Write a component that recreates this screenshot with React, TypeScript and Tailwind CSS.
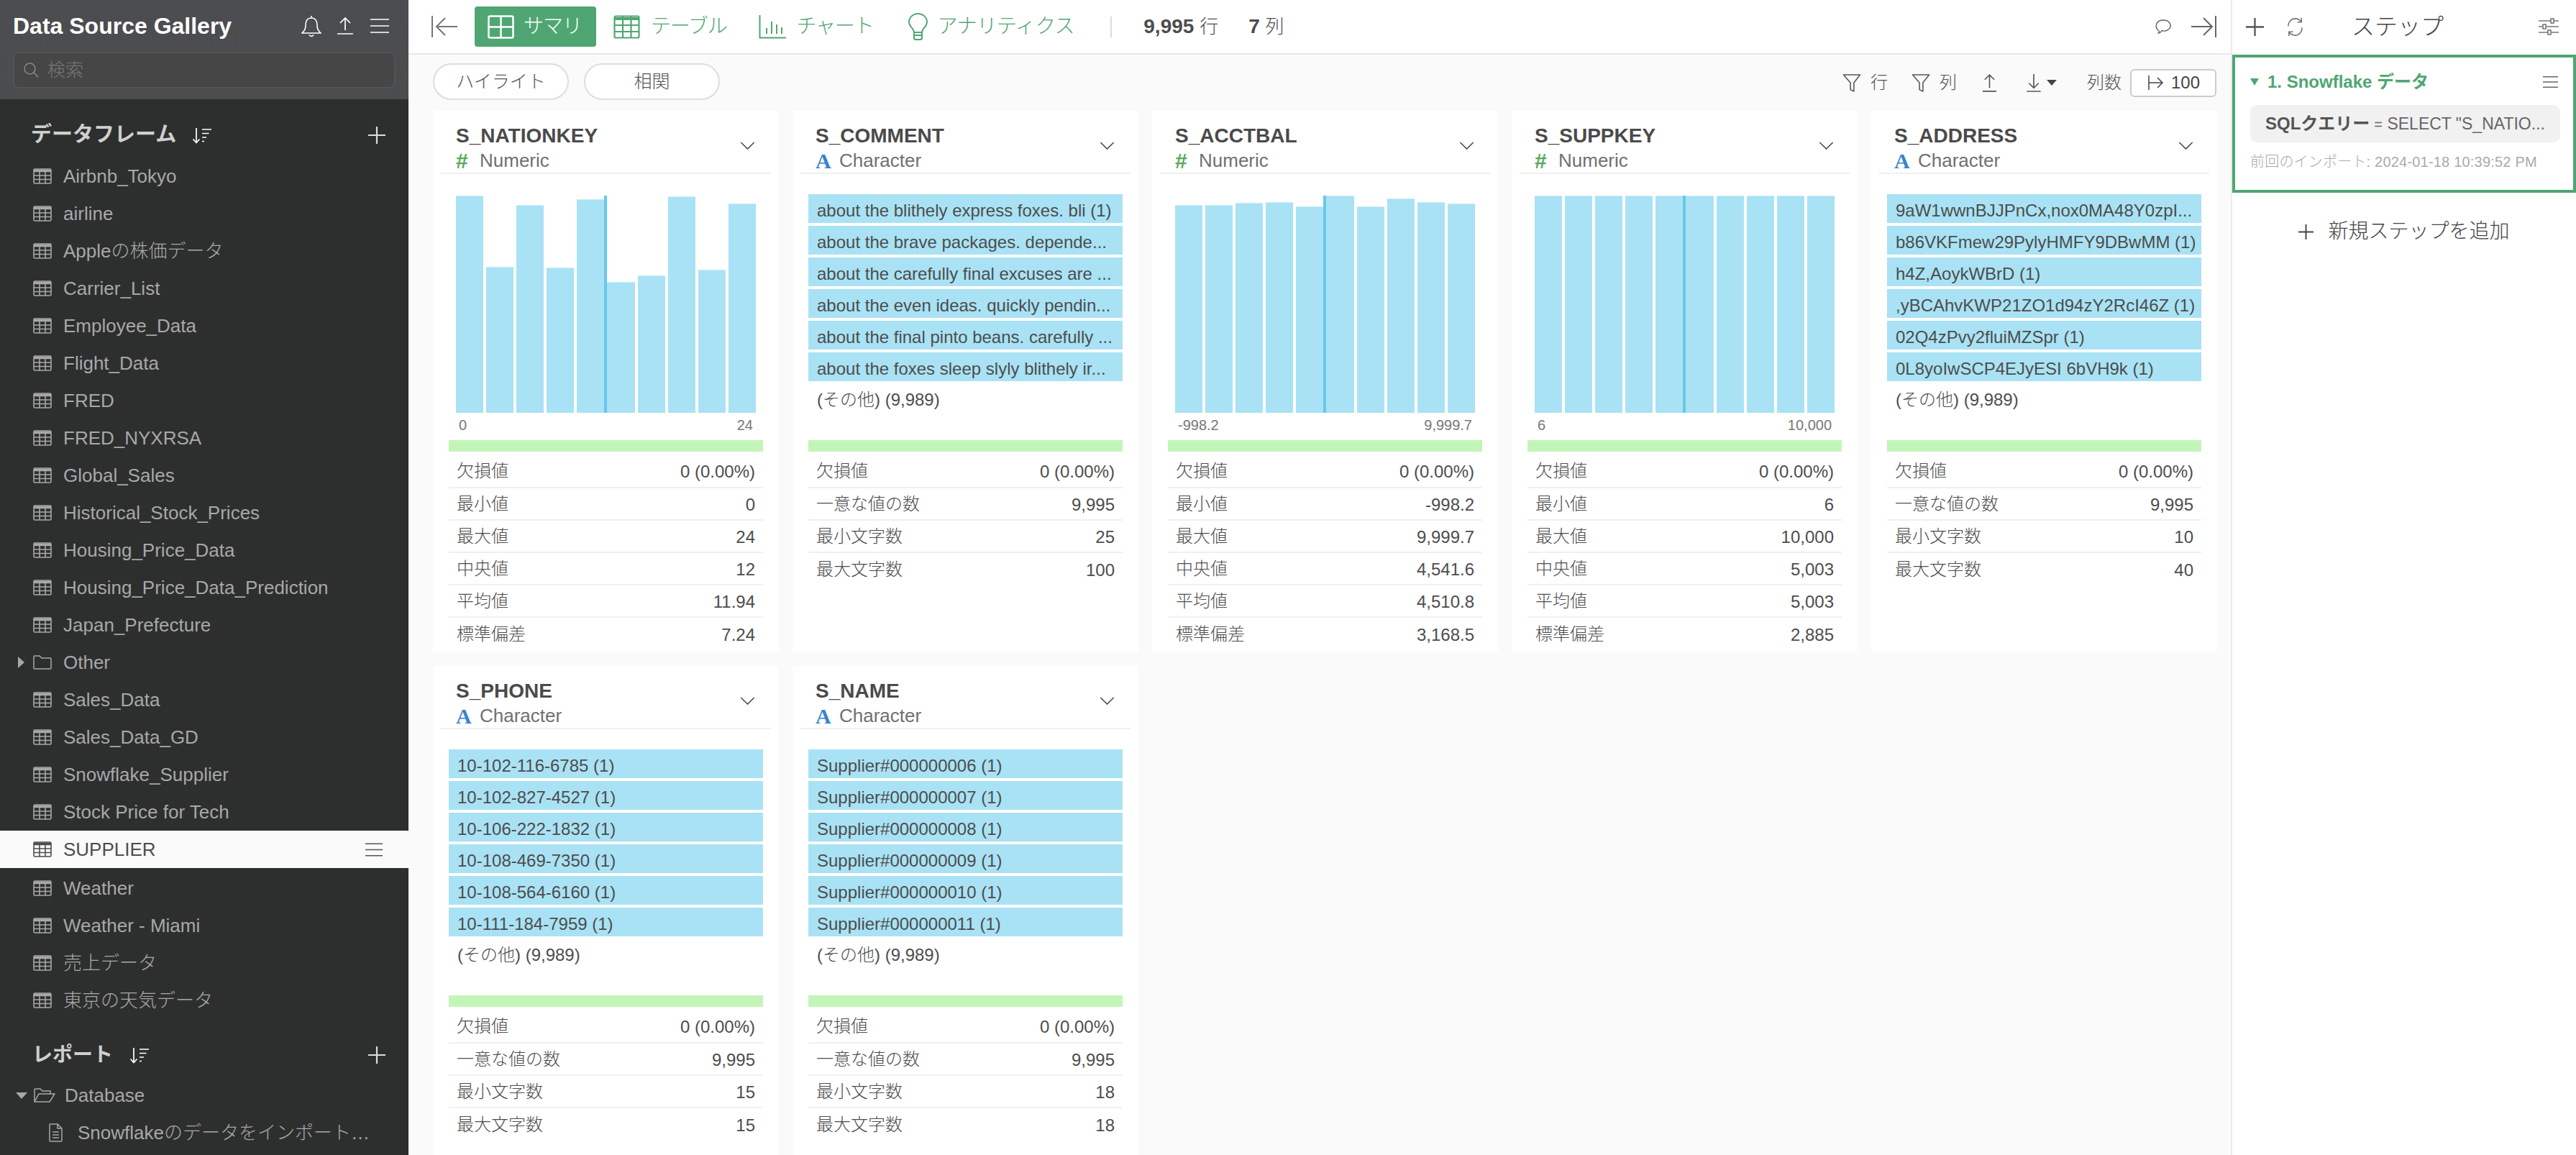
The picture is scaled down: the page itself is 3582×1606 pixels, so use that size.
import React from "react";

const frames = [
  "Airbnb_Tokyo", "airline", "Appleの株価データ", "Carrier_List", "Employee_Data", "Flight_Data", "FRED", "FRED_NYXRSA",
  "Global_Sales", "Historical_Stock_Prices", "Housing_Price_Data", "Housing_Price_Data_Prediction", "Japan_Prefecture",
  "Other", "Sales_Data", "Sales_Data_GD", "Snowflake_Supplier", "Stock Price for Tech", "SUPPLIER", "Weather",
  "Weather - Miami", "売上データ", "東京の天気データ",
];

type Stat = [string, string];

interface CardData {
  name: string;
  kind: "num" | "chr";
  bars?: number[];
  min?: string;
  max?: string;
  items?: string[];
  stats: Stat[];
}

const charStats = (lo: string, hi: string): Stat[] => [
  ["欠損値", "0 (0.00%)"],
  ["一意な値の数", "9,995"],
  ["最小文字数", lo],
  ["最大文字数", hi],
];

const numStats = (a: string, b: string, c: string, d: string, e: string): Stat[] => [
  ["欠損値", "0 (0.00%)"],
  ["最小値", a],
  ["最大値", b],
  ["中央値", c],
  ["平均値", d],
  ["標準偏差", e],
];

const cards: CardData[] = [
  { name: "S_NATIONKEY", kind: "num", bars: [302, 203, 289, 202, 297, 182, 191, 301, 199, 291], min: "0", max: "24", stats: numStats("0", "24", "12", "11.94", "7.24") },
  {
    name: "S_COMMENT", kind: "chr",
    items: ["about the blithely express foxes. bli (1)", "about the brave packages. depende...", "about the carefully final excuses are ...", "about the even ideas. quickly pendin...", "about the final pinto beans. carefully ...", "about the foxes sleep slyly blithely ir..."],
    stats: charStats("25", "100"),
  },
  { name: "S_ACCTBAL", kind: "num", bars: [289, 289, 292, 293, 287, 302, 287, 298, 293, 291], min: "-998.2", max: "9,999.7", stats: numStats("-998.2", "9,999.7", "4,541.6", "4,510.8", "3,168.5") },
  { name: "S_SUPPKEY", kind: "num", bars: [302, 302, 302, 302, 302, 302, 302, 302, 302, 302], min: "6", max: "10,000", stats: numStats("6", "10,000", "5,003", "5,003", "2,885") },
  {
    name: "S_ADDRESS", kind: "chr",
    items: ["9aW1wwnBJJPnCx,nox0MA48Y0zpI...", "b86VKFmew29PylyHMFY9DBwMM (1)", "h4Z,AoykWBrD (1)", ",yBCAhvKWP21ZO1d94zY2RcI46Z (1)", "02Q4zPvy2fluiMZSpr (1)", "0L8yoIwSCP4EJyESI 6bVH9k (1)"],
    stats: charStats("10", "40"),
  },
  {
    name: "S_PHONE", kind: "chr",
    items: ["10-102-116-6785 (1)", "10-102-827-4527 (1)", "10-106-222-1832 (1)", "10-108-469-7350 (1)", "10-108-564-6160 (1)", "10-111-184-7959 (1)"],
    stats: charStats("15", "15"),
  },
  {
    name: "S_NAME", kind: "chr",
    items: ["Supplier#000000006 (1)", "Supplier#000000007 (1)", "Supplier#000000008 (1)", "Supplier#000000009 (1)", "Supplier#000000010 (1)", "Supplier#000000011 (1)"],
    stats: charStats("18", "18"),
  },
];

function TableIcon({ className }: { className?: string }) {
  return (
    <svg viewBox="0 0 26 22" className={className} fill="none" stroke="currentColor" strokeWidth="1.6">
      <rect x="1" y="1" width="24" height="20" rx="1.5" />
      <path d="M1 3.5h24" strokeWidth="3.5" />
      <path d="M1 10h24M1 15.5h24M9 4v17M17 4v17" />
    </svg>
  );
}

function Burger({ className }: { className?: string }) {
  return (
    <svg viewBox="0 0 26 20" className={className} fill="none" stroke="currentColor" strokeWidth="1.7">
      <path d="M0 1h26M0 10h26M0 19h26" />
    </svg>
  );
}

function SortIcon({ className }: { className?: string }) {
  return (
    <svg viewBox="0 0 28 23" className={className} fill="none" stroke="currentColor" strokeWidth="1.7">
      <path d="M6 1v20M1.5 16.5 6 21.5l4.5-5" />
      <path d="M14 3h13M14 8.5h9.5M14 14h6M14 19.5h3" />
    </svg>
  );
}

function PlusIcon({ className }: { className?: string }) {
  return (
    <svg viewBox="0 0 24 24" className={className} fill="none" stroke="currentColor" strokeWidth="2.2">
      <path d="M12 0v24M0 12h24" />
    </svg>
  );
}

function Chevron() {
  return (
    <svg viewBox="0 0 22 12" className="mt-[10px] h-[11px] w-[21px] text-[#444]" fill="none" stroke="currentColor" strokeWidth="1.6">
      <path d="M1 1l10 10L21 1" />
    </svg>
  );
}

function Funnel() {
  return (
    <svg viewBox="0 0 26 26" className="h-[25px] w-[26px] text-[#555]" fill="none" stroke="currentColor" strokeWidth="1.6" strokeLinejoin="round">
      <path d="M1 1h24L16 12.500V25l-5-2.500V12.500z" />
    </svg>
  );
}

function StatsRow({ stat, first, last }: { stat: Stat; first: boolean; last: boolean }) {
  return (
    <div className={`flex items-center justify-between px-[11px] text-[24px] text-[#4d4d4d] ${first ? "h-[51px] pt-[5px]" : "h-[45px]"} ${last ? "" : "border-b-2 border-[#f0f0f0]"}`}>
      <span>{stat[0]}</span>
      <span className="mt-[2px]">{stat[1]}</span>
    </div>
  );
}

function ColumnCard({ card }: { card: CardData }) {
  return (
    <div className="h-[752px] bg-white">
      <div className="mx-[11px] flex h-[88px] items-center justify-between border-b-2 border-[#f0f0f0] pl-[21px] pr-[22px]">
        <div className="pt-[18px]">
          <div className="text-[28px] leading-[34px] font-bold text-[#4a4a4a]">{card.name}</div>
          <div className="flex h-[34px] items-center text-[26px] text-[#707070]">
            {card.kind === "num" ? (
              <span className="mr-[13px] w-[20px] text-[30px] font-bold text-[#5aa95c]">#</span>
            ) : (
              <span className="mr-[13px] w-[20px] font-['Liberation_Serif'] text-[30px] font-bold text-[#3684cc]">A</span>
            )}
            {card.kind === "num" ? "Numeric" : "Character"}
          </div>
        </div>
        <Chevron />
      </div>

      {card.kind === "num" ? (
        <div className="h-[370px] px-[32px] pt-[30px]">
          <div className="relative flex h-[302px] items-end gap-[4px]">
            {card.bars!.map((h, i) => (
              <div key={i} className="flex-1 border-t border-[#c8eef9] bg-[#a9e2f4]" style={{ height: h }} />
            ))}
            <div className="absolute top-0 bottom-0 left-[206px] w-[4px] bg-[#66c9ea]" />
          </div>
          <div className="flex h-[34px] items-center justify-between px-[4px] text-[20px] text-[#777]">
            <span>{card.min}</span>
            <span>{card.max}</span>
          </div>
        </div>
      ) : (
        <div className="h-[370px] px-[22px] pt-[28px]">
          <div className="flex flex-col gap-[4px]">
            {card.items!.map((t) => (
              <div key={t} className="flex h-[40px] items-center overflow-hidden bg-[#a9e2f4] pt-[5px] pl-[12px] text-[24px] whitespace-nowrap text-[#4d4d4d]">
                {t}
              </div>
            ))}
          </div>
          <div className="flex h-[52px] items-center pl-[12px] text-[24px] text-[#4d4d4d]">(その他) (9,989)</div>
        </div>
      )}

      <div className="mx-[22px] h-[16px] bg-[#c3f5b8]" />
      <div className="mx-[22px]">
        {card.stats.map((s, i) => (
          <StatsRow key={s[0]} stat={s} first={i === 0} last={i === card.stats.length - 1} />
        ))}
      </div>
    </div>
  );
}

function Sidebar() {
  return (
    <aside className="flex w-[568px] shrink-0 flex-col bg-[#2d2f2f]">
      <div className="h-[138px] bg-gradient-to-b from-[#4c4d50] to-[#4a4c4e] px-[18px]">
        <div className="flex h-[72px] items-center justify-between pr-[9px]">
          <span className="text-[32px] font-bold text-white">Data Source Gallery</span>
          <div className="flex items-center text-white">
            <svg viewBox="0 0 28 31" className="h-[31px] w-[28px]" fill="none" stroke="currentColor" strokeWidth="1.6">
              <path d="M14 1v3M14 4c-6 0-8 5-8 10 0 6-2 8-5 11h26c-3-3-5-5-5-11 0-5-2-10-8-10zM11 27.500c1 2.500 5 2.500 6 0" />
            </svg>
            <svg viewBox="0 0 22 24" className="ml-[22px] h-[24px] w-[22px]" fill="none" stroke="currentColor" strokeWidth="1.7">
              <path d="M11 1v17M4 8l7-7 7 7M0 23h22" />
            </svg>
            <Burger className="ml-[24px] h-[20px] w-[26px]" />
          </div>
        </div>
        <div className="flex h-[51px] items-center rounded-[8px] border-2 border-[#525354] bg-[#464646] pl-[13px] text-[25px] text-[#777]">
          <svg viewBox="0 0 21 21" className="mr-[12px] h-[21px] w-[21px]" fill="none" stroke="#8a8a8a" strokeWidth="1.5">
            <circle cx="8.500" cy="8.500" r="7.500" />
            <path d="M14 14l6 6" />
          </svg>
          検索
        </div>
      </div>

      <div className="flex h-[81px] items-center justify-between pt-[19px] pr-[32px] pl-[43px] text-[#cfcfcf]">
        <div className="flex items-center">
          <span className="text-[29px] font-bold">データフレーム</span>
          <SortIcon className="ml-[22px] h-[23px] w-[28px] text-white" />
        </div>
        <PlusIcon className="h-[24px] w-[24px] text-[#ddd]" />
      </div>

      {frames.map((name) =>
        name === "Other" ? (
          <div key={name} className="flex h-[52px] items-center text-[26px] text-[#a8a8a8]">
            <span className="ml-[25px] h-0 w-0 border-y-[8px] border-l-[9px] border-y-transparent border-l-[#a8a8a8]" />
            <svg viewBox="0 0 26 20" className="ml-[12px] h-[20px] w-[26px]" fill="none" stroke="currentColor" strokeWidth="1.5">
              <path d="M2 1h7l3 3h12a1 1 0 0 1 1 1v13a1 1 0 0 1-1 1H2a1 1 0 0 1-1-1V2a1 1 0 0 1 1-1z" />
            </svg>
            <span className="ml-[16px]">{name}</span>
          </div>
        ) : (
          <div key={name} className={`flex h-[52px] items-center pl-[46px] text-[26px] ${name === "SUPPLIER" ? "mb-[2px] bg-[#fafafa] text-[#4d4d4d]" : "text-[#a8a8a8]"}`}>
            <TableIcon className="mr-[16px] h-[22px] w-[26px] shrink-0" />
            <span className="flex-1">{name}</span>
            {name === "SUPPLIER" && <Burger className="mr-[36px] h-[19px] w-[24px] text-[#555]" />}
          </div>
        )
      )}

      <div className="flex h-[80px] items-center justify-between pt-[20px] pr-[32px] pl-[45px] text-[#cfcfcf]">
        <div className="flex items-center">
          <span className="text-[28px] font-bold">レポート</span>
          <SortIcon className="ml-[23px] h-[23px] w-[28px] text-white" />
        </div>
        <PlusIcon className="h-[24px] w-[24px] text-[#ddd]" />
      </div>
      <div className="flex h-[52px] items-center text-[26px] text-[#a8a8a8]">
        <span className="ml-[22px] h-0 w-0 border-x-[8px] border-t-[9px] border-x-transparent border-t-[#a8a8a8]" />
        <svg viewBox="0 0 30 20" className="ml-[9px] h-[20px] w-[30px]" fill="none" stroke="currentColor" strokeWidth="1.5">
          <path d="M1 18V2a1 1 0 0 1 1-1h7l3 3h11v4M1 19h21l7-11H7z" />
        </svg>
        <span className="ml-[13px]">Database</span>
      </div>
      <div className="flex h-[52px] items-center text-[26px] text-[#a8a8a8]">
        <svg viewBox="0 0 19 26" className="ml-[68px] h-[26px] w-[19px]" fill="none" stroke="currentColor" strokeWidth="1.5">
          <path d="M2 1h10l6 6v17a1 1 0 0 1-1 1H2a1 1 0 0 1-1-1V2a1 1 0 0 1 1-1zM12 1v6h6M5 12h9M5 16h9M5 20h9" />
        </svg>
        <span className="ml-[21px] whitespace-nowrap">Snowflakeのデータをインポート…</span>
      </div>
    </aside>
  );
}

function TopBar() {
  return (
    <div className="flex h-[76px] shrink-0 items-center border-b-2 border-[#e8e8e8] bg-white pl-[32px] text-[28px] text-[#4fa673]">
      <svg viewBox="0 0 36 30" className="h-[30px] w-[36px] text-[#777]" fill="none" stroke="currentColor" strokeWidth="2">
        <path d="M1 0v30M36 15H8M19 3 7 15l12 12" />
      </svg>
      <div className="ml-[24px] flex h-[56px] w-[169px] items-center rounded-[4px] bg-[#4fa673] pl-[18px] tracking-[-1px] text-white">
        <svg viewBox="0 0 37 33" className="mr-[13px] h-[33px] w-[37px]" fill="none" stroke="currentColor" strokeWidth="2.500">
          <rect x="1.500" y="1.500" width="34" height="30" rx="2" />
          <path d="M1.500 16.500h34M18.500 1.500v30" />
        </svg>
        サマリ
      </div>
      <div className="ml-[24px] flex items-center tracking-[-1.2px]">
        <svg viewBox="0 0 37 33" className="mr-[15px] h-[33px] w-[37px]" fill="none" stroke="currentColor" strokeWidth="2.200">
          <rect x="1.500" y="1.500" width="34" height="30" rx="2" />
          <path d="M1.500 5h34" strokeWidth="4" />
          <path d="M1.500 14h34M1.500 23h34M13 1.500v30M24.500 1.500v30" />
        </svg>
        テーブル
      </div>
      <div className="ml-[44px] flex items-center tracking-[-1.2px]">
        <svg viewBox="0 0 38 33" className="mr-[15px] h-[33px] w-[38px]" fill="none" stroke="currentColor" strokeWidth="2">
          <path d="M1.500 0v31.500H38" />
          <path d="M11 26v-8M18 26V9M25 26V13M32 26v-9" />
        </svg>
        チャート
      </div>
      <div className="ml-[49px] flex items-center tracking-[-0.3px]">
        <svg viewBox="0 0 27 38" className="mr-[13px] h-[38px] w-[27px]" fill="none" stroke="currentColor" strokeWidth="2">
          <path d="M8 27c0-5-7-8-7-14.500a12.500 11.500 0 0 1 25 0C26 19 19 22 19 27zM8 27v8a2 2 0 0 0 2 2h7a2 2 0 0 0 2-2v-8M8 31h11" />
        </svg>
        アナリティクス
      </div>
      <div className="ml-[50px] h-[29px] w-[2px] bg-[#ddd]" />
      <div className="ml-[44px] text-[#4d4d4d]">
        <span className="font-bold">9,995</span> <span className="text-[26px]">行</span>
      </div>
      <div className="ml-[42px] text-[#4d4d4d]">
        <span className="font-bold">7</span> <span className="text-[26px]">列</span>
      </div>
      <div className="ml-auto flex items-center pr-[20px] text-[#666]">
        <svg viewBox="0 0 26 22" className="h-[21px] w-[26px]" fill="none" stroke="currentColor" strokeWidth="1.500">
          <path d="M7 17c-8-6-4-16 6-16s14 9 7 14c-3 2-7 2-9 1-1 2-3 4-5 4 1-1 1-2 1-3z" />
        </svg>
        <svg viewBox="0 0 35 30" className="ml-[26px] h-[30px] w-[35px]" fill="none" stroke="currentColor" strokeWidth="2">
          <path d="M34 0v30M0 15h28M17 3l12 12-12 12" />
        </svg>
      </div>
    </div>
  );
}

function FilterBar() {
  return (
    <div className="flex h-[78px] shrink-0 items-center pl-[34px] text-[24px] text-[#555]">
      <div className="mb-[3px] flex h-[51px] w-[189px] items-center justify-center rounded-full border-2 border-[#ddd] bg-white text-[25px]">ハイライト</div>
      <div className="mb-[3px] ml-[21px] flex h-[51px] w-[189px] items-center justify-center rounded-full border-2 border-[#ddd] bg-white text-[25px]">相関</div>
      <div className="ml-auto flex items-center pr-[20px]">
        <Funnel />
        <span className="ml-[13px]">行</span>
        <span className="ml-[33px]"><Funnel /></span>
        <span className="ml-[13px]">列</span>
        <svg viewBox="0 0 20 26" className="ml-[36px] h-[25px] w-[19px]" fill="none" stroke="currentColor" strokeWidth="1.700">
          <path d="M10 1v19M3 8l7-7 7 7M0 25h20" />
        </svg>
        <svg viewBox="0 0 20 26" className="ml-[42px] h-[25px] w-[20px]" fill="none" stroke="currentColor" strokeWidth="1.700">
          <path d="M10 0v19M3 13l7 7 7-7M0 25h20" />
        </svg>
        <span className="ml-[8px] h-0 w-0 border-x-[7px] border-t-[8px] border-x-transparent border-t-[#444]" />
        <span className="ml-[42px]">列数</span>
        <div className="ml-[12px] flex h-[39px] w-[120px] items-center rounded-[6px] border-2 border-[#ccc] bg-white pl-[23px] text-[#444]">
          <svg viewBox="0 0 22 20" className="mr-[10px] h-[20px] w-[22px]" fill="none" stroke="currentColor" strokeWidth="1.500">
            <path d="M1 0v20M1 10h19M13 3l7 7-7 7" />
          </svg>
          100
        </div>
      </div>
    </div>
  );
}

function StepPanel() {
  return (
    <aside className="flex w-[480px] shrink-0 flex-col border-l-2 border-[#eaeaea] bg-white text-[#555]">
      <div className="flex h-[74px] shrink-0 items-center pl-[19px]">
        <PlusIcon className="h-[25px] w-[25px]" />
        <svg viewBox="0 0 28 28" className="ml-[30px] h-[27px] w-[27px] text-[#777]" fill="none" stroke="currentColor" strokeWidth="1.700">
          <path d="M4 13C4 7 8 2 14 2c4 0 7 2 9 5M23 1v6h-6M24 15c0 6-4 11-10 11-4 0-7-2-9-5M5 27v-6h6" />
        </svg>
        <span className="ml-[65px] text-[32px] text-[#444]">ステップ</span>
        <svg viewBox="0 0 28 24" className="ml-auto mr-[24px] h-[24px] w-[28px] text-[#777]" fill="none" stroke="currentColor" strokeWidth="1.600">
          <path d="M0 4h28M0 12h28M0 20h28" />
          <rect x="17" y="1" width="4" height="6" fill="white" />
          <rect x="6" y="9" width="4" height="6" fill="white" />
          <rect x="13" y="17" width="4" height="6" fill="white" />
        </svg>
      </div>
      <div className="mt-[2px] h-[192px] border-4 border-[#4fa673] px-[21px]">
        <div className="flex h-[66px] items-center pt-[2px]">
          <span className="h-0 w-0 border-x-[6px] border-t-[10px] border-x-transparent border-t-[#4fa673]" />
          <span className="ml-[12px] flex-1 text-[24px] font-bold text-[#4fa673]">1. Snowflake データ</span>
          <Burger className="h-[18px] w-[21px] text-[#666]" />
        </div>
        <div className="flex h-[52px] w-[431px] items-center overflow-hidden rounded-[10px] bg-[#f1f1f1] pl-[21px] text-[24px] whitespace-nowrap text-[#555]">
          <span className="font-bold">SQLクエリー</span>
          <span className="ml-[6px] text-[23px] text-[#666]"><span className="text-[20px]">=</span> SELECT "S_NATIO...</span>
        </div>
        <div className="flex h-[60px] items-center pb-[6px] text-[20px] tracking-[0.2px] text-[#aaa]">前回のインポート: 2024-01-18 10:39:52 PM</div>
      </div>
      <div className="flex h-[108px] items-center justify-center text-[28px] text-[#444]">
        <PlusIcon className="mr-[20px] h-[21px] w-[21px]" />
        新規ステップを追加
      </div>
    </aside>
  );
}

export default function App() {
  return (
    <div className="flex h-[1606px] w-[3582px] overflow-hidden bg-white font-['Liberation_Sans','Noto_Sans_CJK_JP',sans-serif] font-light">
      <Sidebar />
      <main className="flex min-w-0 flex-1 flex-col bg-[#fafafa]">
        <TopBar />
        <FilterBar />
        <div className="grid grid-cols-[repeat(5,481px)] gap-x-[19px] gap-y-[20px] pl-[34px]">
          {cards.map((c) => (
            <ColumnCard key={c.name} card={c} />
          ))}
        </div>
      </main>
      <StepPanel />
    </div>
  );
}
